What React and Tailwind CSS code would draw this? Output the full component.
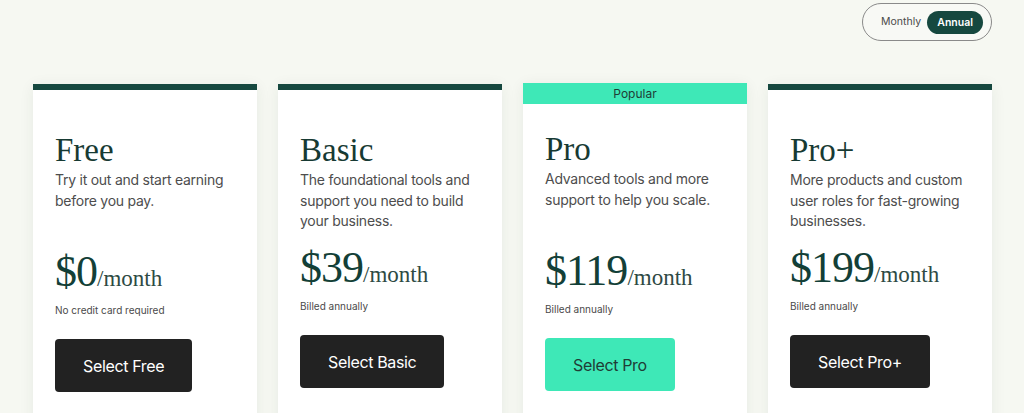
import React from "react";

const serif = { fontFamily: '"Liberation Serif", "DejaVu Serif", serif' };

const plans = [
  {
    name: "Free",
    desc: "Try it out and start earning before you pay.",
    price: "$0",
    note: "No credit card required",
    cta: "Select Free",
    priceMt: "mt-[18px]",
  },
  {
    name: "Basic",
    desc: "The foundational tools and support you need to build your business.",
    price: "$39",
    note: "Billed annually",
    cta: "Select Basic",
    priceMt: "mt-[14px]",
  },
  {
    name: "Pro",
    desc: "Advanced tools and more support to help you scale.",
    price: "$119",
    note: "Billed annually",
    cta: "Select Pro",
    popular: true,
    priceMt: "mt-[18px]",
  },
  {
    name: "Pro+",
    desc: "More products and custom user roles for fast-growing businesses.",
    price: "$199",
    note: "Billed annually",
    cta: "Select Pro+",
    priceMt: "mt-[14px]",
  },
];

function Card({ p }) {
  return (
    <div
      className={`bg-white w-[224px] shadow-[0_2px_14px_rgba(30,60,40,0.07)] ${p.popular ? "-mt-px" : ""}`}
    >
      {p.popular ? (
        <div className="h-[21px] bg-[#3ee8b7] text-[#1f3d36] text-[12px] leading-[21px] text-center">
          Popular
        </div>
      ) : (
        <div className="h-[6px] bg-[#16483f]" />
      )}
      <div className={`px-[22px] pb-[60px] ${p.popular ? "pt-[25px]" : "pt-[40px]"}`}>
        <h2 style={serif} className="text-[33px] leading-[40px] text-[#173a33] font-normal">
          {p.name}
        </h2>
        <p className="h-[60px] text-[14px] leading-[20.5px] tracking-[-0.25px] text-[#4d4d4d]">{p.desc}</p>
        <div className={`${p.priceMt} flex items-baseline text-[#133f37]`} style={serif}>
          <span className="text-[44px] leading-[48px] tracking-[-1px]">{p.price}</span>
          <span className="text-[23px] leading-[24px] text-[#2e4a44]">/month</span>
        </div>
        <p className="mt-[7px] text-[10px] leading-[14px] text-[#4a4a4a]">{p.note}</p>
        <button
          className={`mt-[22px] h-[53px] px-[28px] rounded-[4px] text-[16px] tracking-[-0.35px] ${
            p.popular ? "bg-[#3ee8b7] text-[#1f3d36]" : "bg-[#222222] text-white"
          }`}
        >
          {p.cta}
        </button>
      </div>
    </div>
  );
}

export default function App() {
  return (
    <div
      className="min-h-[413px] h-[413px] overflow-hidden bg-[#f6f8f2] pl-[33px] pr-[32px] pt-[3px]"
      style={{ fontFamily: 'Inter, "Liberation Sans", sans-serif' }}
    >
      <div className="flex justify-end">
        <div className="h-[38px] w-[130px] rounded-full border border-[#8a8a8a] bg-[#f8f9f5] flex items-center justify-between pl-[18px] pr-[8px]">
          <span className="text-[10.5px] text-[#4a4a4a]">Monthly</span>
          <span className="h-[23px] px-[10px] rounded-full bg-[#16483f] text-white text-[10.5px] font-semibold leading-[23px]">
            Annual
          </span>
        </div>
      </div>
      <div className="mt-[43px] flex gap-[21px] items-start">
        {plans.map((p) => (
          <Card key={p.name} p={p} />
        ))}
      </div>
    </div>
  );
}
